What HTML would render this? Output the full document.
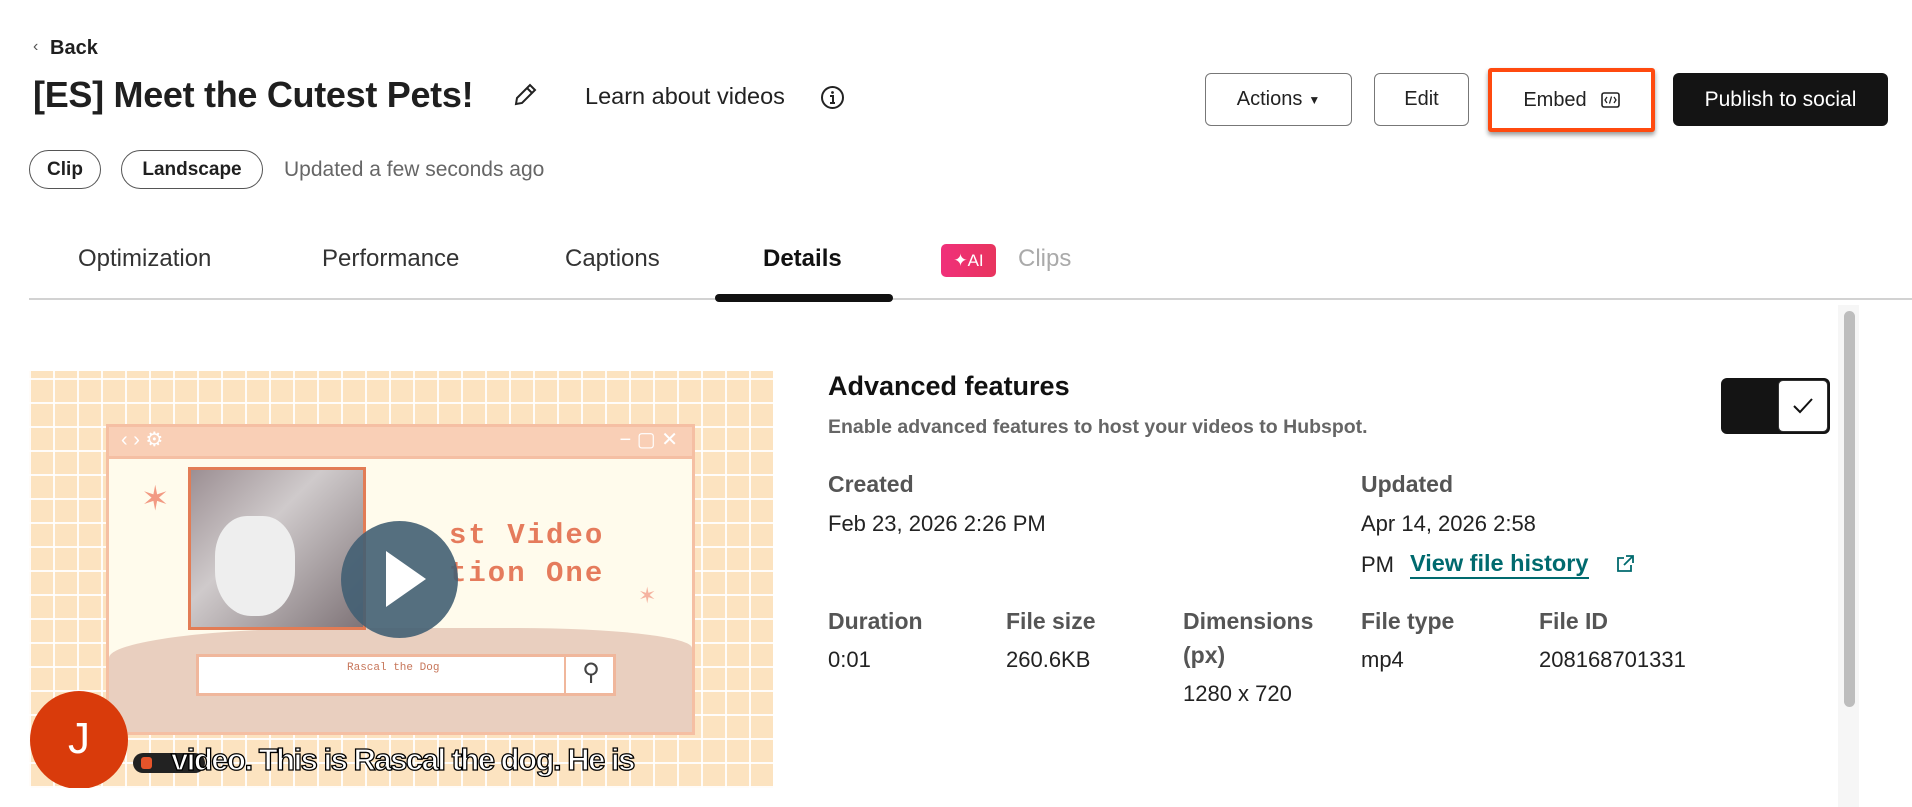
<!DOCTYPE html>
<html><head><meta charset="utf-8"><style>
*{margin:0;padding:0;box-sizing:border-box}
body{width:1912px;height:807px;overflow:hidden;background:#fff;font-family:"Liberation Sans",sans-serif;color:#1f1f1f;position:relative}
.a{position:absolute;white-space:nowrap}
.btn{position:absolute;border:1px solid #777;border-radius:6px;background:#fff;font-size:20px;display:flex;align-items:center;justify-content:center;color:#222}
.pill{position:absolute;border:1.5px solid #555;border-radius:20px;font-weight:bold;font-size:19px;display:flex;align-items:center;justify-content:center}
.tab{position:absolute;top:245px;font-size:24px;color:#333}
.lbl{position:absolute;font-weight:bold;font-size:23px;color:#555;white-space:nowrap}
.val{position:absolute;font-size:22px;color:#222;white-space:nowrap}
</style></head><body>

<div class="a" style="left:33px;top:38px;font-size:16px;color:#555">‹</div>
<div class="a" style="left:50px;top:37px;font-size:20px;font-weight:bold">Back</div>
<div class="a" style="left:33px;top:74px;font-size:36px;font-weight:bold;letter-spacing:-0.3px">[ES] Meet the Cutest Pets!</div>
<svg class="a" style="left:512px;top:82px" width="26" height="26" viewBox="0 0 26 26"><path d="M4 22 L5 16 L18 3 L23 8 L10 21 Z M15 6 L20 11" fill="none" stroke="#222" stroke-width="2"/></svg>
<div class="a" style="left:585px;top:83px;font-size:23.5px;color:#222">Learn about videos</div>
<svg class="a" style="left:820px;top:85px" width="25" height="25" viewBox="0 0 25 25"><circle cx="12.5" cy="12.5" r="10.5" fill="none" stroke="#222" stroke-width="2"/><circle cx="12.5" cy="7.5" r="1.4" fill="#222"/><path d="M10 11h3v7M10 18h5" stroke="#222" stroke-width="2" fill="none"/></svg>

<div class="pill" style="left:29px;top:150px;width:72px;height:39px">Clip</div>
<div class="pill" style="left:121px;top:150px;width:142px;height:39px">Landscape</div>
<div class="a" style="left:284px;top:158px;font-size:21px;color:#666">Updated a few seconds ago</div>

<div class="btn" style="left:1205px;top:73px;width:147px;height:53px">Actions <span style="font-size:12px;margin-left:6px">▼</span></div>
<div class="btn" style="left:1374px;top:73px;width:95px;height:53px">Edit</div>
<div class="a" style="left:1488px;top:68px;width:167px;height:64px;border:4px solid #FF4A0F;border-radius:3px;background:#fff;box-shadow:0 3px 5px rgba(0,0,0,.4);display:flex;align-items:center;justify-content:center;font-size:20px;color:#222">Embed
<svg style="margin-left:14px" width="19" height="16" viewBox="0 0 19 16"><rect x="1" y="1" width="17" height="14" rx="2" fill="none" stroke="#222" stroke-width="1.6"/><path d="M6 5 L4 8 L6 11 M13 5 L15 8 L13 11 M10.5 4.5 L8.5 11.5" stroke="#222" stroke-width="1.3" fill="none"/></svg></div>
<div class="a" style="left:1673px;top:73px;width:215px;height:53px;background:#141414;border-radius:6px;color:#fff;font-size:21px;display:flex;align-items:center;justify-content:center">Publish to social</div>

<div class="tab" style="left:78px">Optimization</div>
<div class="tab" style="left:322px">Performance</div>
<div class="tab" style="left:565px">Captions</div>
<div class="tab" style="left:763px;font-weight:bold;color:#111">Details</div>
<div class="a" style="left:941px;top:244px;width:55px;height:33px;border-radius:5px;background:linear-gradient(90deg,#F0307A,#E8345E);color:#fff;font-size:17px;display:flex;align-items:center;justify-content:center">✦AI</div>
<div class="tab" style="left:1018px;color:#aaa">Clips</div>
<div class="a" style="left:29px;top:298px;width:1883px;height:2px;background:#d2d2d2"></div>
<div class="a" style="left:715px;top:294px;width:178px;height:8px;border-radius:4px;background:#111"></div>

<div class="a" style="left:1838px;top:305px;width:21px;height:502px;background:#f6f6f6"></div>
<div class="a" style="left:1844px;top:311px;width:11px;height:396px;border-radius:6px;background:#bdbdbd"></div>

<!-- video -->
<div class="a" style="left:29px;top:371px;width:744px;height:417px;overflow:hidden;background-color:#FCE3C0;background-image:repeating-linear-gradient(90deg,rgba(255,255,255,.9) 0 2px,transparent 2px 24px),repeating-linear-gradient(0deg,rgba(255,255,255,.9) 0 2px,transparent 2px 24px)">
  <div class="a" style="left:77px;top:53px;width:589px;height:311px;background:#FFFBEC;border:3px solid #F5BFA3"></div>
  <div class="a" style="left:77px;top:53px;width:589px;height:35px;background:#F9CFB6;border:3px solid #F5BFA3;color:#fff;font-size:20px;padding-left:12px;line-height:26px">‹ › ⚙<span style="float:right;margin-right:14px">− ▢ ✕</span></div>
  <div class="a" style="left:80px;top:257px;width:583px;height:104px;background:#E9CFBF;border-radius:40% 30% 0 0/30px 20px 0 0"></div>
  <div class="a" style="left:159px;top:96px;width:178px;height:163px;background:linear-gradient(135deg,#9c8f93,#cfcacb 40%,#7f7478);border:3px solid #E27C55"></div>
  <div class="a" style="left:186px;top:145px;width:80px;height:100px;background:#eee;border-radius:40% 40% 45% 45%"></div>
  <div class="a" style="left:420px;top:148px;font-size:29px;font-weight:bold;color:#E57B5C;letter-spacing:2px;font-family:'Liberation Mono',monospace">st Video</div>
  <div class="a" style="left:420px;top:186px;font-size:29px;font-weight:bold;color:#E57B5C;letter-spacing:2px;font-family:'Liberation Mono',monospace">tion One</div>
  <div class="a" style="left:112px;top:108px;font-size:34px;color:#F29A83">✶</div>
  <div class="a" style="left:609px;top:212px;font-size:22px;color:#F5B3A0">✶</div>
  <div class="a" style="left:312px;top:150px;width:117px;height:117px;border-radius:50%;background:rgba(66,95,115,.9)"></div>
  <div class="a" style="left:357px;top:180px;width:0;height:0;border-left:40px solid #fff;border-top:28px solid transparent;border-bottom:28px solid transparent"></div>
  <div class="a" style="left:167px;top:283px;width:420px;height:42px;background:#fff;border:3px solid #F0B79C"></div>
  <div class="a" style="left:535px;top:283px;width:52px;height:42px;border-left:2px solid #F0B79C;color:#444;font-size:24px;text-align:center;line-height:38px">⚲</div>
  <div class="a" style="left:318px;top:291px;font-size:11px;color:#C7765A;font-family:'Liberation Mono',monospace">Rascal the Dog</div>
  <div class="a" style="left:1px;top:320px;width:98px;height:98px;border-radius:50%;background:#D93B0B;color:#fff;font-size:44px;text-align:center;line-height:96px">J</div>
  <div class="a" style="left:104px;top:382px;width:72px;height:20px;border-radius:10px;background:#222"></div>
  <div class="a" style="left:112px;top:386px;width:11px;height:12px;border-radius:3px;background:#e6542a"></div>
  <div class="a" style="left:142px;top:371px;font-size:31px;font-weight:bold;color:#fff;letter-spacing:-1.5px;-webkit-text-stroke:1.3px #000">video. This is Rascal the dog. He is</div>
</div>

<div class="a" style="left:828px;top:371px;font-size:27px;font-weight:bold;color:#111">Advanced features</div>
<div class="a" style="left:828px;top:416px;font-size:19.5px;font-weight:bold;color:#666">Enable advanced features to host your videos to Hubspot.</div>
<div class="a" style="left:1721px;top:378px;width:109px;height:56px;background:#141414;border-radius:6px"></div>
<div class="a" style="left:1778px;top:380px;width:50px;height:52px;background:#fff;border-radius:5px;border:1px solid #333;display:flex;align-items:center;justify-content:center">
<svg width="22" height="18" viewBox="0 0 22 18"><path d="M2 9 L8 15 L20 2" fill="none" stroke="#111" stroke-width="2"/></svg></div>

<div class="lbl" style="left:828px;top:471px">Created</div>
<div class="val" style="left:828px;top:511px">Feb 23, 2026 2:26 PM</div>
<div class="lbl" style="left:1361px;top:471px">Updated</div>
<div class="val" style="left:1361px;top:511px">Apr 14, 2026 2:58</div>
<div class="val" style="left:1361px;top:552px">PM</div>
<div class="a" style="left:1410px;top:550px;font-size:23.5px;font-weight:bold;color:#006A6E;border-bottom:2px solid #006A6E;line-height:27px">View file history</div>
<svg class="a" style="left:1615px;top:554px" width="20" height="20" viewBox="0 0 20 20"><path d="M9 4H3v13h13v-6M11 2h7v7M18 2 L9 11" fill="none" stroke="#006A6E" stroke-width="1.8"/></svg>

<div class="lbl" style="left:828px;top:608px">Duration</div>
<div class="lbl" style="left:1006px;top:608px">File size</div>
<div class="lbl" style="left:1183px;top:608px">Dimensions</div>
<div class="lbl" style="left:1183px;top:642px">(px)</div>
<div class="lbl" style="left:1361px;top:608px">File type</div>
<div class="lbl" style="left:1539px;top:608px">File ID</div>
<div class="val" style="left:828px;top:647px">0:01</div>
<div class="val" style="left:1006px;top:647px">260.6KB</div>
<div class="val" style="left:1183px;top:681px">1280 x 720</div>
<div class="val" style="left:1361px;top:647px">mp4</div>
<div class="val" style="left:1539px;top:647px">208168701331</div>
</body></html>
